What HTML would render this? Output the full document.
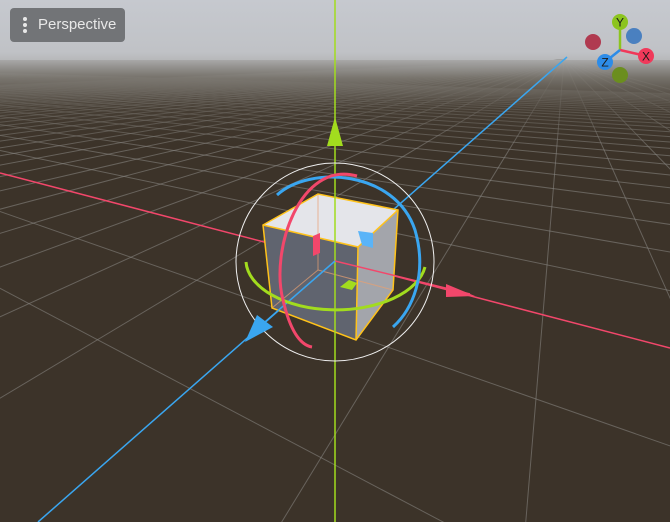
<!DOCTYPE html>
<html><head><meta charset="utf-8">
<style>
html,body{margin:0;padding:0;width:670px;height:522px;overflow:hidden;background:#3c3329}
svg{position:absolute;left:0;top:0;overflow:hidden}
#btn{position:absolute;left:10px;top:8px;width:115px;height:34px;background:#727477;border-radius:4px;font-family:"Liberation Sans",sans-serif;font-size:15px;color:#e8e8e8;line-height:34px}
#btn span{position:absolute;left:28px}
.d{position:absolute;left:13px;width:4px;height:4px;border-radius:2px;background:#e8e8e8}
</style></head><body>
<svg id="s" width="670" height="522" viewBox="0 0 670 522">
<defs>
<linearGradient id="sky" x1="0" y1="0" x2="0" y2="1">
<stop offset="0" stop-color="#c6c9cf"/><stop offset="0.85" stop-color="#c0c2c6"/><stop offset="1" stop-color="#b6b7b9"/>
</linearGradient>
<linearGradient id="fog" x1="0" y1="60" x2="0" y2="150" gradientUnits="userSpaceOnUse">
<stop offset="0" stop-color="#a8a8a8" stop-opacity="1"/><stop offset="0.2" stop-color="#7a766f" stop-opacity="0.92"/><stop offset="0.55" stop-color="#4f473d" stop-opacity="0.55"/><stop offset="1" stop-color="#3c3329" stop-opacity="0"/>
</linearGradient>
<clipPath id="c"><rect x="0" y="0" width="670" height="522"/></clipPath>
</defs>
<g clip-path="url(#c)">
<rect x="0" y="0" width="670" height="61" fill="url(#sky)"/>
<rect x="0" y="60" width="670" height="462" fill="#3c3329"/>
<g id="grid" stroke="#8c8a86" stroke-width="1" stroke-opacity="0.55"></g>
<rect x="0" y="60" width="670" height="90" fill="url(#fog)"/>
<line x1="0" y1="173" x2="670" y2="348" stroke="#f2476b" stroke-width="1.5"/>
<line x1="38" y1="522" x2="567" y2="57" stroke="#3aa6f0" stroke-width="1.5"/>
<polygon points="263,225 358,247 356,340 272,308" fill="#60646f"/>
<polygon points="358,247 398,210 393,290 356,340" fill="#a3a5ab"/>
<polygon points="263,225 318,194 398,210 358,247" fill="#e4e5ea"/>
<g stroke="#e8a070" stroke-width="1" stroke-opacity="0.7" fill="none">
<line x1="318" y1="194" x2="318" y2="270"/><line x1="318" y1="270" x2="272" y2="308"/><line x1="318" y1="270" x2="393" y2="290"/>
</g>
<g stroke="#ffc21a" stroke-width="1.5" fill="none">
<polygon points="263,225 318,194 398,210 393,290 356,340 272,308"/>
<polyline points="263,225 358,247 398,210"/><line x1="358" y1="247" x2="356" y2="340"/>
</g>
<line x1="335" y1="0" x2="335" y2="522" stroke="#a2dc1e" stroke-width="1.5"/>
<line x1="335" y1="261" x2="470" y2="294" stroke="#f2476b" stroke-width="1.5"/>
<line x1="335" y1="261" x2="250" y2="335" stroke="#3aa6f0" stroke-width="1.5"/>
<circle cx="335" cy="262" r="99" fill="none" stroke="#f0f0f0" stroke-width="1"/>
<path d="M246,262 A90,50 0 0 0 425,267" fill="none" stroke="#a2dc1e" stroke-width="3"/>
<path d="M277,195 C310,165 395,170 415,230 C428,275 412,310 393,327" fill="none" stroke="#3aa6f0" stroke-width="3"/>
<path d="M357,176 C300,160 270,250 283,300 C290,330 300,345 312,347" fill="none" stroke="#f2476b" stroke-width="3"/>
<polygon points="335,117 327,146 343,146" fill="#a2dc1e"/>
<polygon points="475,296 446,284 446,297" fill="#f2476b"/>
<polygon points="245,342 257,315 273,327" fill="#3aa6f0"/>
<polygon points="313,236 320,233 320,253 313,256" fill="#f2476b"/>
<polygon points="358,231 373,233 373,248 362,245" fill="#5ab4f8"/>
<polygon points="340,287 349,280 357,283 352,290" fill="#a2dc1e"/>
<circle cx="593" cy="42" r="8" fill="#b03a50"/>
<circle cx="634" cy="36" r="8" fill="#4a80c0"/>
<circle cx="620" cy="75" r="8" fill="#6b8e1e"/>
<line x1="620" y1="50" x2="620" y2="22" stroke="#8cc41e" stroke-width="2.5"/>
<line x1="620" y1="50" x2="646" y2="56" stroke="#f0395a" stroke-width="2.5"/>
<line x1="620" y1="50" x2="605" y2="62" stroke="#2d8ce8" stroke-width="2.5"/>
<circle cx="620" cy="22" r="8" fill="#8cc41e"/>
<circle cx="646" cy="56" r="8" fill="#f0395a"/>
<circle cx="605" cy="62" r="8" fill="#2d8ce8"/>
<g font-family="Liberation Sans,sans-serif" font-size="12" fill="#1a1a1a" text-anchor="middle">
<text x="620" y="26.5">Y</text><text x="646" y="60.5">X</text><text x="605" y="66.5">Z</text>
</g>
</g>
</svg>
<div id="btn"><div class="d" style="top:9px"></div><div class="d" style="top:15px"></div><div class="d" style="top:21px"></div><span>Perspective</span></div>
<script>
(function(){
var g=document.getElementById('grid');
var O=[335,261],VX=[-433,60],VZ=[564,60],ax=0.1065,bz=0.194;
function P(V,u){return [(O[0]-u*V[0])/(1-u),(O[1]-u*V[1])/(1-u)];}
function line(A,B){
  var dx=B[0]-A[0],dy=B[1]-A[1];
  var k=Math.max(1,1200/Math.sqrt(dx*dx+dy*dy));
  var x2=A[0]+dx*k,y2=A[1]+dy*k;
  var l=document.createElementNS('http://www.w3.org/2000/svg','line');
  l.setAttribute('x1',A[0]);l.setAttribute('y1',A[1]);l.setAttribute('x2',x2);l.setAttribute('y2',y2);
  g.appendChild(l);
}
for(var i=-40;i<=9;i++){ if(i===0)continue; var u=i*ax; if(u>=0.99)continue; var p=P(VX,u); line(VZ,p);}
for(var j=-30;j<=5;j++){ if(j===0)continue; var u=j*bz; if(u>=0.99)continue; var p=P(VZ,u); line(VX,p);}
})();
</script>
</body></html>
